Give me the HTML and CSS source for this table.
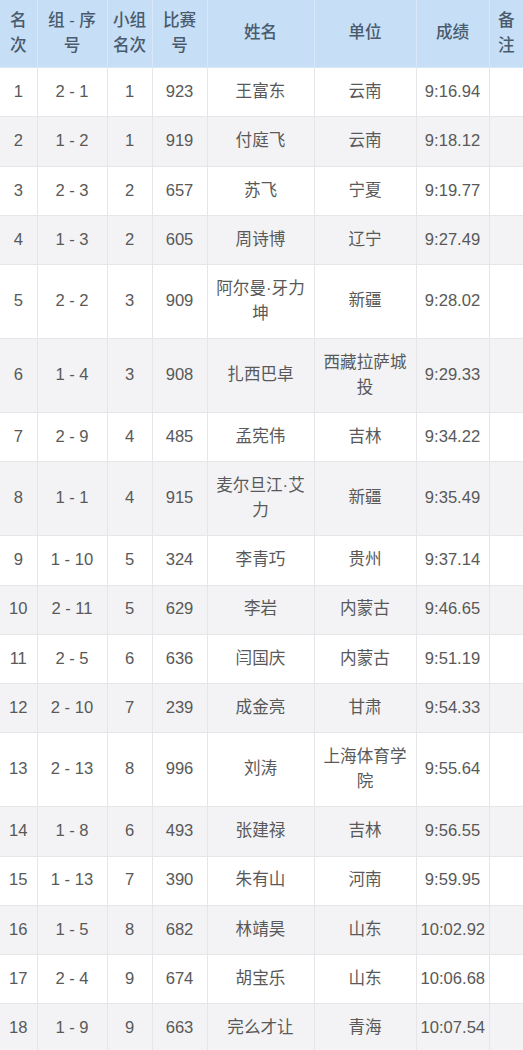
FILE: index.html
```html
<!DOCTYPE html>
<html lang="zh-CN">
<head>
<meta charset="utf-8">
<title>成绩表</title>
<link rel="stylesheet" href="styles.css">
</head>
<body>
<table class="results">
  <colgroup>
    <col class="c-rank"><col class="c-group"><col class="c-sub"><col class="c-bib">
    <col class="c-name"><col class="c-unit"><col class="c-time"><col class="c-note">
  </colgroup>
  <thead>
    <tr><th>名次</th><th>组 - 序号</th><th>小组名次</th><th>比赛号</th><th>姓名</th><th>单位</th><th>成绩</th><th>备注</th></tr>
  </thead>
  <tbody>
    <tr><td>1</td><td>2 - 1</td><td>1</td><td>923</td><td>王富东</td><td>云南</td><td>9:16.94</td><td></td></tr>
    <tr><td>2</td><td>1 - 2</td><td>1</td><td>919</td><td>付庭飞</td><td>云南</td><td>9:18.12</td><td></td></tr>
    <tr><td>3</td><td>2 - 3</td><td>2</td><td>657</td><td>苏飞</td><td>宁夏</td><td>9:19.77</td><td></td></tr>
    <tr><td>4</td><td>1 - 3</td><td>2</td><td>605</td><td>周诗博</td><td>辽宁</td><td>9:27.49</td><td></td></tr>
    <tr><td>5</td><td>2 - 2</td><td>3</td><td>909</td><td>阿尔曼·牙力坤</td><td>新疆</td><td>9:28.02</td><td></td></tr>
    <tr><td>6</td><td>1 - 4</td><td>3</td><td>908</td><td>扎西巴卓</td><td>西藏拉萨城投</td><td>9:29.33</td><td></td></tr>
    <tr><td>7</td><td>2 - 9</td><td>4</td><td>485</td><td>孟宪伟</td><td>吉林</td><td>9:34.22</td><td></td></tr>
    <tr><td>8</td><td>1 - 1</td><td>4</td><td>915</td><td>麦尔旦江·艾力</td><td>新疆</td><td>9:35.49</td><td></td></tr>
    <tr><td>9</td><td>1 - 10</td><td>5</td><td>324</td><td>李青巧</td><td>贵州</td><td>9:37.14</td><td></td></tr>
    <tr><td>10</td><td>2 - 11</td><td>5</td><td>629</td><td>李岩</td><td>内蒙古</td><td>9:46.65</td><td></td></tr>
    <tr><td>11</td><td>2 - 5</td><td>6</td><td>636</td><td>闫国庆</td><td>内蒙古</td><td>9:51.19</td><td></td></tr>
    <tr><td>12</td><td>2 - 10</td><td>7</td><td>239</td><td>成金亮</td><td>甘肃</td><td>9:54.33</td><td></td></tr>
    <tr><td>13</td><td>2 - 13</td><td>8</td><td>996</td><td>刘涛</td><td>上海体育学院</td><td>9:55.64</td><td></td></tr>
    <tr><td>14</td><td>1 - 8</td><td>6</td><td>493</td><td>张建禄</td><td>吉林</td><td>9:56.55</td><td></td></tr>
    <tr><td>15</td><td>1 - 13</td><td>7</td><td>390</td><td>朱有山</td><td>河南</td><td>9:59.95</td><td></td></tr>
    <tr><td>16</td><td>1 - 5</td><td>8</td><td>682</td><td>林靖昊</td><td>山东</td><td>10:02.92</td><td></td></tr>
    <tr><td>17</td><td>2 - 4</td><td>9</td><td>674</td><td>胡宝乐</td><td>山东</td><td>10:06.68</td><td></td></tr>
    <tr><td>18</td><td>1 - 9</td><td>9</td><td>663</td><td>完么才让</td><td>青海</td><td>10:07.54</td><td></td></tr>
  </tbody>
</table>
</body>
</html>
```

FILE: styles.css
```css
html, body {
  margin: 0;
  padding: 0;
  background: #ffffff;
}

body {
  font-family: "Liberation Sans", "Noto Sans CJK SC", sans-serif;
  font-size: 16.6px;
  color: #595959;
}

.results {
  width: 523px;
  table-layout: fixed;
  border-collapse: collapse;
}

.c-rank { width: 37px; }
.c-group { width: 70px; }
.c-sub { width: 45px; }
.c-bib { width: 55px; }
.c-name { width: 107px; }
.c-unit { width: 102px; }
.c-time { width: 73px; }
.c-note { width: 34px; }

.results th,
.results td {
  text-align: center;
  vertical-align: middle;
  line-height: 24.6px;
  padding: 11.85px 4px;
  border: 1px solid #e6e6e8;
  word-break: normal;
}

.results th {
  background: #c6dff6;
  color: #4a5b6e;
  font-weight: 500;
  padding-top: 9px;
  padding-bottom: 9px;
  border-color: #d7e8f8;
  border-top: none;
}

.results tr > :first-child { border-left: none; }
.results tr > :last-child { border-right: none; }

.results tbody tr:nth-child(even) td {
  background: #f3f3f5;
}
```
